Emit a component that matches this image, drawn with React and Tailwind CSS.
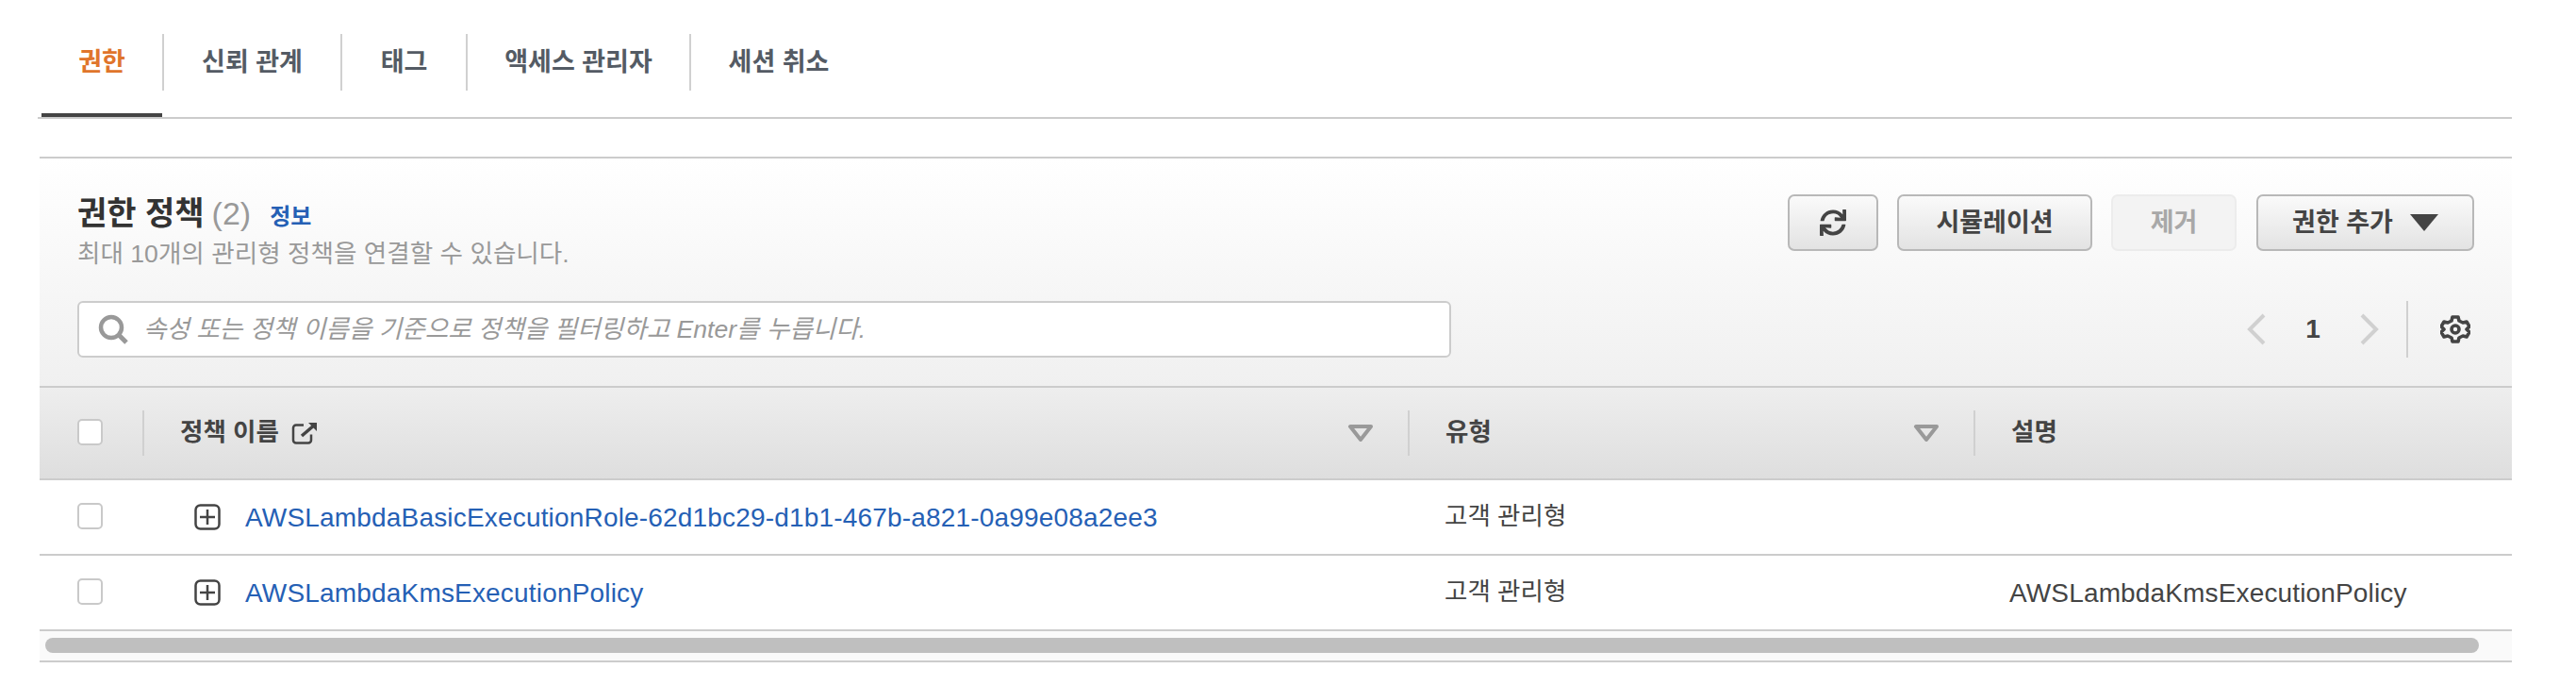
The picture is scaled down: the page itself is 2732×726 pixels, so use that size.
import React from 'react';
import { FaSync } from 'react-icons/fa';

const tabs = [
  { label: '권한', width: 'w-[130px]', active: true },
  { label: '신뢰 관계', width: 'w-[189px]' },
  { label: '태그', width: 'w-[133px]' },
  { label: '액세스 관리자', width: 'w-[237px]' },
  { label: '세션 취소', width: 'w-[186px]', last: true },
];

const rows = [
  { name: 'AWSLambdaBasicExecutionRole-62d1bc29-d1b1-467b-a821-0a99e08a2ee3', type: '고객 관리형', desc: '' },
  { name: 'AWSLambdaKmsExecutionPolicy', type: '고객 관리형', desc: 'AWSLambdaKmsExecutionPolicy' },
];

function Checkbox({ className = '' }) {
  return <div className={`w-[27px] h-[28px] bg-white border-2 border-[#c9c9c9] rounded-[5px] ${className}`} />;
}

function SortIcon() {
  return (
    <svg width="28" height="18" viewBox="0 0 28 18" fill="none">
      <path d="M3 2h22L14 16z" stroke="#999999" strokeWidth="4" strokeLinejoin="round" />
    </svg>
  );
}

function ExpandIcon() {
  return (
    <svg width="28" height="28" viewBox="0 0 28 28" fill="none" stroke="#444" strokeWidth="2.5">
      <rect x="1.5" y="1.5" width="25" height="25" rx="5" />
      <path d="M14 6v16M6 14h16" />
    </svg>
  );
}

function Button({ children, className = '', disabled }) {
  return (
    <div
      className={`h-[60px] flex items-center justify-center rounded-[7px] text-[27px] font-bold border-2 ${
        disabled
          ? 'text-[#a8a8a8] border-[#ececec] bg-[#f3f3f3]'
          : 'text-[#444] border-[#b8b8b8] bg-gradient-to-b from-[#fafafa] to-[#e3e3e3]'
      } ${className}`}
    >
      {children}
    </div>
  );
}

function HeaderCell({ children, sort, className = '' }) {
  return (
    <div className={`h-[48px] flex items-center justify-between pl-[38px] pr-[36px] border-l-2 border-[#d0d0d0] ${className}`}>
      <div className="flex items-center gap-[13px] text-[26.5px] font-bold text-[#444]">{children}</div>
      {sort && <SortIcon />}
    </div>
  );
}

export default function App() {
  return (
    <div className="w-[2732px] h-[726px] bg-white pl-[42px] pr-[68px] font-['Liberation_Sans','Noto_Sans_CJK_KR',sans-serif]">
      {/* tabs */}
      <div className="h-[126px] -ml-[2px] pl-[4px] pt-[36px] border-b-2 border-[#cccccc] flex items-start">
        {tabs.map((tab) => (
          <div
            key={tab.label}
            className={`${tab.width} h-[60px] flex items-center justify-center text-[27px] font-bold ${
              tab.last ? '' : 'border-r-2 border-[#d0d0d0]'
            } ${tab.active ? 'text-[#e0752b]' : 'text-[#545b64]'}`}
          >
            {tab.label}
          </div>
        ))}
      </div>
      <div className="w-[128px] h-[4px] ml-[2px] bg-[#444] -mt-[6px]" />

      {/* panel */}
      <div className="mt-[42px] border-t-2 border-[#cccccc]">
        <div className="h-[241px] px-[40px] pt-[38px] bg-gradient-to-b from-white to-[#f0f0f0]">
          <div className="flex justify-between h-[89px]">
            <div className="-mt-[5px]">
              <div className="flex items-baseline">
                <span className="text-[34px] font-bold text-[#333333]">권한 정책</span>
                <span className="text-[34px] text-[#999999] ml-[8px]">(2)</span>
                <span className="text-[24px] font-bold text-[#2560b5] ml-[20px]">정보</span>
              </div>
              <div className="text-[26.6px] text-[#999999] -mt-[2px]">최대 10개의 관리형 정책을 연결할 수 있습니다.</div>
            </div>
            <div className="flex">
              <Button className="w-[96px] mr-[20px]">
                <FaSync size={28} color="#444" />
              </Button>
              <Button className="w-[207px] mr-[20px]">시뮬레이션</Button>
              <Button className="w-[133px] mr-[21px]" disabled>제거</Button>
              <Button className="w-[231px] gap-[18px]">
                권한 추가
                <svg width="30" height="18" viewBox="0 0 30 18"><path d="M0 0h30L15 18z" fill="#444" /></svg>
              </Button>
            </div>
          </div>
          <div className="flex justify-between items-center mt-[24px]">
            <div className="w-[1457px] h-[60px] bg-white border-2 border-[#cccccc] rounded-[6px] flex items-center pl-[20px] gap-[16px]">
              <svg width="32" height="32" viewBox="0 0 32 32" fill="none" stroke="#999999" strokeWidth="4.5">
                <circle cx="14" cy="14" r="11" />
                <path d="M22 22l8 8" strokeWidth="5" />
              </svg>
              <span className="text-[26.6px] italic text-[#999999] pt-[2px]">속성 또는 정책 이름을 기준으로 정책을 필터링하고 Enter를 누릅니다.</span>
            </div>
            <div className="flex items-center h-[60px] pr-[4px]">
              <svg width="20" height="34" viewBox="0 0 20 34" fill="none" stroke="#d0d0d0" strokeWidth="4"><path d="M18 2L3 17l15 15" /></svg>
              <span className="w-[100px] text-center text-[28px] font-bold text-[#444]">1</span>
              <svg width="20" height="34" viewBox="0 0 20 34" fill="none" stroke="#d0d0d0" strokeWidth="4"><path d="M2 2l15 15L2 32" /></svg>
              <div className="h-[60px] w-[2px] bg-[#d0d0d0] ml-[29px] mr-[34px]" />
              <svg width="32" height="32" viewBox="0 0 32 32" fill="none" stroke="#444" strokeWidth="3.6" strokeLinejoin="round">
                <path d="M13 3h6l1 4 4 2 4-1 3 5-3 3v0l3 3-3 5-4-1-4 2-1 4h-6l-1-4-4-2-4 1-3-5 3-3v0l-3-3 3-5 4 1 4-2z" />
                <circle cx="16" cy="16" r="4" />
              </svg>
            </div>
          </div>
        </div>

        {/* table */}
        <div className="grid grid-cols-[109px_1342px_600px_571px]">
          <div className="col-span-4 grid grid-cols-subgrid items-center h-[100px] border-y-2 border-[#cccccc] bg-gradient-to-b from-[#eeeeee] to-[#dedede]">
            <div className="pl-[40px]"><Checkbox className="-mt-[2px]" /></div>
            <HeaderCell sort>
              정책 이름
              <svg width="28" height="24" viewBox="0 0 28 24" fill="none" stroke="#444" strokeWidth="2.5">
                <path d="M13 3.5H5a3 3 0 0 0-3 3v13a3 3 0 0 0 3 3h13a3 3 0 0 0 3-3v-6" />
                <path d="M11 15L25 3" strokeWidth="3.5" />
                <path d="M18 1h9v9z" fill="#444" stroke="none" />
              </svg>
            </HeaderCell>
            <HeaderCell sort>유형</HeaderCell>
            <HeaderCell>설명</HeaderCell>
          </div>
          {rows.map((row) => (
            <div key={row.name} className="col-span-4 grid grid-cols-subgrid items-center h-[80px] border-b-2 border-[#cccccc] text-[26.5px] text-[#444]">
              <div className="pl-[40px]"><Checkbox className="-mt-[2px]" /></div>
              <div className="flex items-center pl-[55px] gap-[26px]">
                <ExpandIcon />
                <span className="text-[28px] text-[#2560b5] tracking-[0.18px] pt-[2px]">{row.name}</span>
              </div>
              <div className="pl-[39px]">{row.type}</div>
              <div className="pl-[38px] text-[28px] tracking-[0.15px] pt-[2px]">{row.desc}</div>
            </div>
          ))}
        </div>

        {/* horizontal scrollbar */}
        <div className="h-[33px] bg-[#fafafa] border-b-2 border-[#cccccc] pl-[6px] pr-[35px] pt-[7px]">
          <div className="h-[16px] bg-[#bfbfbf] rounded-full" />
        </div>
      </div>
    </div>
  );
}
